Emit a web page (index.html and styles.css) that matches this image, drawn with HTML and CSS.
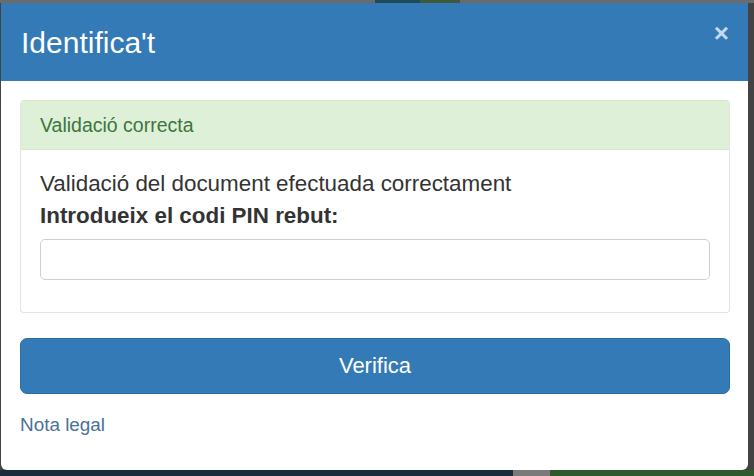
FILE: index.html
```html
<!DOCTYPE html>
<html lang="ca">
<head>
<meta charset="utf-8">
<title>Identifica't</title>
<link rel="stylesheet" href="styles.css">
</head>
<body>
<div class="top-strip"></div>
<div class="modal">
  <div class="modal-header">
    <h3 class="modal-title">Identifica't</h3>
    <span class="close">&times;</span>
  </div>
  <div class="modal-body">
    <div class="panel">
      <div class="panel-heading">Validació correcta</div>
      <div class="panel-body">
        <p class="msg">Validació del document efectuada correctament</p>
        <label class="pin-label" for="pin">Introdueix el codi PIN rebut:</label>
        <input class="pin-input" id="pin" type="text">
      </div>
    </div>
    <button class="btn-verify" type="button">Verifica</button>
    <a class="legal" href="#">Nota legal</a>
  </div>
</div>
<div class="bottom-strip"></div>
</body>
</html>
```
FILE: styles.css
```css
html, body {
  margin: 0;
  padding: 0;
}
body {
  width: 754px;
  height: 476px;
  overflow: hidden;
  background: #434343;
  font-family: "Liberation Sans", Arial, sans-serif;
  color: #333;
}
.top-strip {
  height: 3px;
  background: linear-gradient(to right, #6b6b6b 0 375px, #1f4a5a 375px 420px, #3f5a3a 420px 460px, #6b6b6b 460px);
}
.modal {
  margin-left: 1px;
  width: 747px;
  height: 467px;
  background: #fff;
  border-radius: 0 0 6px 6px;
  overflow: hidden;
  display: flex;
  flex-direction: column;
}
.modal-header {
  height: 78px;
  flex: none;
  background: #337ab7;
  display: flex;
  justify-content: space-between;
  align-items: flex-start;
  padding: 0 20px;
  box-sizing: border-box;
}
.modal-title {
  margin: 25px 0 0 0;
  font-size: 30px;
  line-height: 30px;
  font-weight: normal;
  color: #fff;
}
.close {
  margin-top: 15px;
  margin-right: -1px;
  font-size: 26px;
  line-height: 30px;
  font-weight: bold;
  color: #c6d9ec;
}
.modal-body {
  padding: 19px 18px 0 19px;
  display: flex;
  flex-direction: column;
}
.panel {
  border: 1px solid #e4e4e4;
  border-top-color: #d6e9c6;
  border-radius: 4px;
  overflow: hidden;
}
.panel-heading {
  height: 49px;
  box-sizing: border-box;
  padding: 0 19px;
  background: #dff0d8;
  border-bottom: 1px solid #d6e9c6;
  color: #3c763d;
  font-size: 19.5px;
  line-height: 49px;
}
.panel-body {
  padding: 18px 19px 32px 19px;
  display: flex;
  flex-direction: column;
}
.msg {
  margin: 0;
  font-size: 22.4px;
  line-height: 32px;
}
.pin-label {
  font-size: 22.4px;
  line-height: 32px;
  font-weight: bold;
}
.pin-input {
  margin-top: 7px;
  height: 41px;
  box-sizing: border-box;
  border: 1px solid #cfcfcf;
  border-radius: 5px;
  background: #fff;
  font: inherit;
  padding: 0 12px;
}
.btn-verify {
  margin-top: 25px;
  height: 56px;
  border: 1px solid #2e6da4;
  border-radius: 7px;
  background: #337ab7;
  color: #fff;
  font-family: "Liberation Sans", Arial, sans-serif;
  font-size: 22px;
  padding: 0;
}
.legal {
  margin-top: 19px;
  align-self: flex-start;
  font-size: 18.9px;
  line-height: 24px;
  color: #4b7298;
  text-decoration: none;
}
.bottom-strip {
  height: 6px;
  width: 754px;
  background: linear-gradient(to right, #1b2b3b 0 513px, #7a7a7a 513px 550px, #2d5a2d 550px);
}
```
